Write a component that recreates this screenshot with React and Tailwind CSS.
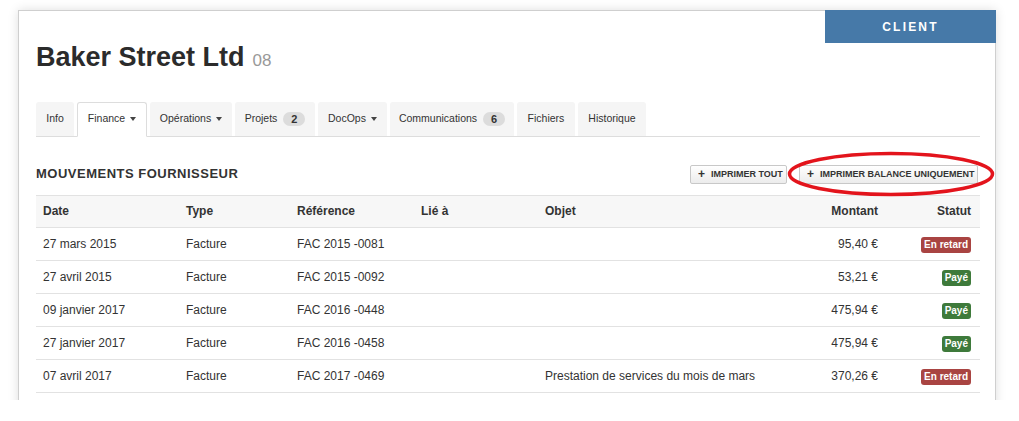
import React from 'react'

const tabs = [
  { label: 'Info', w: 'w-[38px]' },
  { label: 'Finance', w: 'w-[70px]', caret: true, active: true },
  { label: 'Opérations', w: 'w-[82px]', caret: true },
  { label: 'Projets', w: 'w-[80px]', badge: '2' },
  { label: 'DocOps', w: 'w-[69px]', caret: true },
  { label: 'Communications', w: 'w-[124px]', badge: '6' },
  { label: 'Fichiers', w: 'w-[58px]' },
  { label: 'Historique', w: 'w-[68px]' },
]

const rows = [
  { date: '27 mars 2015', type: 'Facture', ref: 'FAC 2015 -0081', objet: '', montant: '95,40 €', late: true },
  { date: '27 avril 2015', type: 'Facture', ref: 'FAC 2015 -0092', objet: '', montant: '53,21 €', late: false },
  { date: '09 janvier 2017', type: 'Facture', ref: 'FAC 2016 -0448', objet: '', montant: '475,94 €', late: false },
  { date: '27 janvier 2017', type: 'Facture', ref: 'FAC 2016 -0458', objet: '', montant: '475,94 €', late: false },
  { date: '07 avril 2017', type: 'Facture', ref: 'FAC 2017 -0469', objet: 'Prestation de services du mois de mars', montant: '370,26 €', late: true },
]

const Caret = () => (
  <span className="ml-[5px] inline-block w-0 h-0 border-l-[3.5px] border-r-[3.5px] border-t-[4px] border-l-transparent border-r-transparent border-t-[#444]" />
)

const PrintButton = ({ label, width }) => (
  <button className={`${width} h-[19px] flex items-center gap-[6px] pl-[7px] border border-[#c8c8c8] rounded-[2px] bg-gradient-to-b from-white to-[#ececec] text-[9px] font-bold text-[#333] leading-none whitespace-nowrap`}>
    <span className="text-[12px] font-bold leading-none">+</span>
    <span>{label}</span>
  </button>
)

const Label = ({ late }) => (
  late
    ? <span className="inline-block px-[3px] h-[16px] leading-[16px] rounded-[3px] bg-[#a94442] text-white text-[10px] font-bold">En retard</span>
    : <span className="inline-block px-[3px] h-[16px] leading-[16px] rounded-[3px] bg-[#3e7a3b] text-white text-[10px] font-bold">Payé</span>
)

const gridCols = 'grid grid-cols-[143px_111px_124px_124px_227px_120px_94px]'

export default function App() {
  return (
    <div className="w-[1019px] h-[421px] bg-white" style={{ fontFamily: '"Liberation Sans", Arial, sans-serif' }}>
      <div className="h-[400px] overflow-hidden pt-[10px] pl-[18px]">
        <div className="relative w-[978px] h-[420px] bg-white border border-[#cfcfcf] shadow-[0_0_10px_rgba(0,0,0,0.13)] pt-[31px] pl-[17px] pr-[15px] text-[#333]">
          {/* badge */}
          <div className="absolute -top-px -right-px w-[171px] h-[33px] bg-[#4679a8] flex items-center justify-center text-white text-[12px] font-bold tracking-[2.2px]">
            CLIENT
          </div>

          <div className="flex items-baseline gap-[8px]">
            <h1 className="text-[27px] leading-[30px] font-bold text-[#2b2b2b]">Baker Street Ltd</h1>
            <span className="text-[17px] text-[#999]">08</span>
          </div>

          <div className="mt-[28px] flex gap-[3px] border-b border-[#ddd]">
            {tabs.map(t => (
              <div
                key={t.label}
                className={`${t.w} h-[34px] flex items-center justify-center rounded-t-[3px] text-[10.5px] text-[#333] ${t.active ? 'bg-white border border-[#ddd] border-b-white -mb-px h-[35px]' : 'bg-[#f5f5f5]'}`}
              >
                <span>{t.label}</span>
                {t.caret && <Caret />}
                {t.badge && (
                  <span className="ml-[6px] w-[22px] h-[14px] rounded-full bg-[#dcdcdc] text-[11px] font-bold leading-[14px] text-center">{t.badge}</span>
                )}
              </div>
            ))}
          </div>

          <div className="mt-[28px] h-[19px] flex items-center justify-between">
            <h2 className="text-[13px] font-bold tracking-[0.5px] text-[#333]">MOUVEMENTS FOURNISSEUR</h2>
            <div className="flex gap-[12px] mr-[2px]">
              <PrintButton label="IMPRIMER TOUT" width="w-[97px]" />
              <PrintButton label="IMPRIMER BALANCE UNIQUEMENT" width="w-[179px]" />
            </div>
          </div>

          <div className="mt-[11px] text-[12px]">
            <div className={`${gridCols} h-[33px] items-center bg-[#f7f7f7] border-t border-b border-[#e2e2e2] font-bold`}>
              <div className="pl-[7px]">Date</div>
              <div className="pl-[7px]">Type</div>
              <div className="pl-[7px]">Référence</div>
              <div className="pl-[7px]">Lié à</div>
              <div className="pl-[7px]">Objet</div>
              <div className="pr-[7px] text-right">Montant</div>
              <div className="pr-[8px] text-right">Statut</div>
            </div>
            {rows.map((r, i) => (
              <div key={i} className={`${gridCols} h-[33px] items-center border-b border-[#e2e2e2]`}>
                <div className="pl-[7px]">{r.date}</div>
                <div className="pl-[7px]">{r.type}</div>
                <div className="pl-[7px]">{r.ref}</div>
                <div className="pl-[7px]"></div>
                <div className="pl-[7px] whitespace-nowrap">{r.objet}</div>
                <div className="pr-[7px] text-right">{r.montant}</div>
                <div className="pr-[8px] text-right"><Label late={r.late} /></div>
              </div>
            ))}
          </div>

          {/* red annotation ellipse */}
          <svg className="absolute left-[768px] top-[140px] pointer-events-none" width="208" height="46" viewBox="0 0 208 46">
            <ellipse cx="104" cy="23" rx="101.5" ry="20.5" fill="none" stroke="#e3141c" strokeWidth="3.5" />
          </svg>
        </div>
      </div>
    </div>
  )
}
